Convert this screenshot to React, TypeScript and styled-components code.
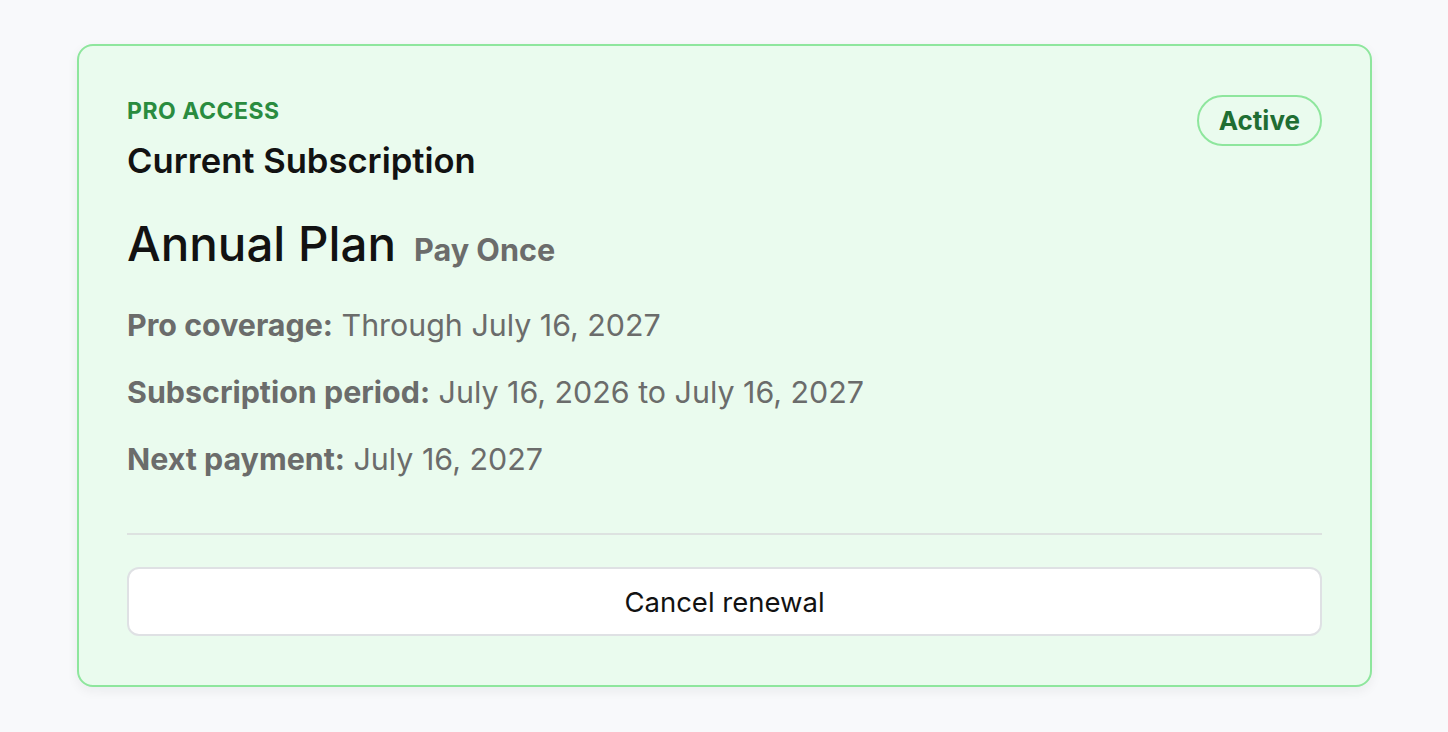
import React from "react";
import styled, { createGlobalStyle } from "styled-components";

const GlobalStyle = createGlobalStyle`
  * { box-sizing: border-box; }
  body {
    margin: 0;
    background: #f8f9fb;
    font-family: Inter, "Noto Sans", sans-serif;
  }
`;

const Page = styled.div`
  padding: 44px 76px 44px 77px;
`;

const Card = styled.section`
  background: #eafbee;
  border: 2px solid #8ee69d;
  border-radius: 16px;
  padding: 50px 48px 49px;
  box-shadow: 0 4px 12px rgba(20, 40, 30, 0.06);
`;

const Header = styled.div`
  display: flex;
  justify-content: space-between;
  align-items: flex-start;
`;

const Eyebrow = styled.div`
  color: #2a8c3f;
  font-size: 23px;
  font-weight: 700;
  letter-spacing: 0.5px;
  line-height: 30px;
`;

const Title = styled.h2`
  margin: 13px 0 0;
  color: #121212;
  font-size: 34.6px;
  font-weight: 600;
  line-height: 42px;
`;

const Badge = styled.span`
  margin-top: -1px;
  padding: 0 20px;
  height: 51px;
  display: inline-flex;
  align-items: center;
  border: 2px solid #8ee69d;
  border-radius: 999px;
  color: #1f6e33;
  font-size: 26px;
  font-weight: 700;
`;

const PlanRow = styled.div`
  margin-top: 35px;
  display: flex;
  align-items: baseline;
  gap: 18px;
`;

const PlanName = styled.span`
  color: #121212;
  font-size: 47.5px;
  font-weight: 500;
  line-height: 56px;
`;

const PlanType = styled.span`
  color: #6b6c6b;
  font-size: 30.6px;
  font-weight: 700;
`;

const Details = styled.div`
  margin-top: 33px;
  display: flex;
  flex-direction: column;
  gap: 27px;
`;

const Detail = styled.p`
  margin: 0;
  color: #6b6c6b;
  font-size: 30.4px;
  line-height: 40px;
  b {
    font-weight: 700;
  }
`;

const Divider = styled.hr`
  margin: 54px 0 32px;
  border: none;
  border-top: 2px solid #dde2e0;
`;

const CancelButton = styled.button`
  width: 100%;
  height: 69px;
  background: #fff;
  border: 2px solid #dfe1e4;
  border-radius: 12px;
  color: #121212;
  font-family: inherit;
  font-size: 27.5px;
  cursor: pointer;
`;

export default function App() {
  return (
    <Page>
      <GlobalStyle />
      <Card>
        <Header>
          <div>
            <Eyebrow>PRO ACCESS</Eyebrow>
            <Title>Current Subscription</Title>
          </div>
          <Badge>Active</Badge>
        </Header>
        <PlanRow>
          <PlanName>Annual Plan</PlanName>
          <PlanType>Pay Once</PlanType>
        </PlanRow>
        <Details>
          <Detail>
            <b>Pro coverage:</b> Through July 16, 2027
          </Detail>
          <Detail>
            <b>Subscription period:</b> July 16, 2026 to July 16, 2027
          </Detail>
          <Detail>
            <b>Next payment:</b> July 16, 2027
          </Detail>
        </Details>
        <Divider />
        <CancelButton>Cancel renewal</CancelButton>
      </Card>
    </Page>
  );
}
